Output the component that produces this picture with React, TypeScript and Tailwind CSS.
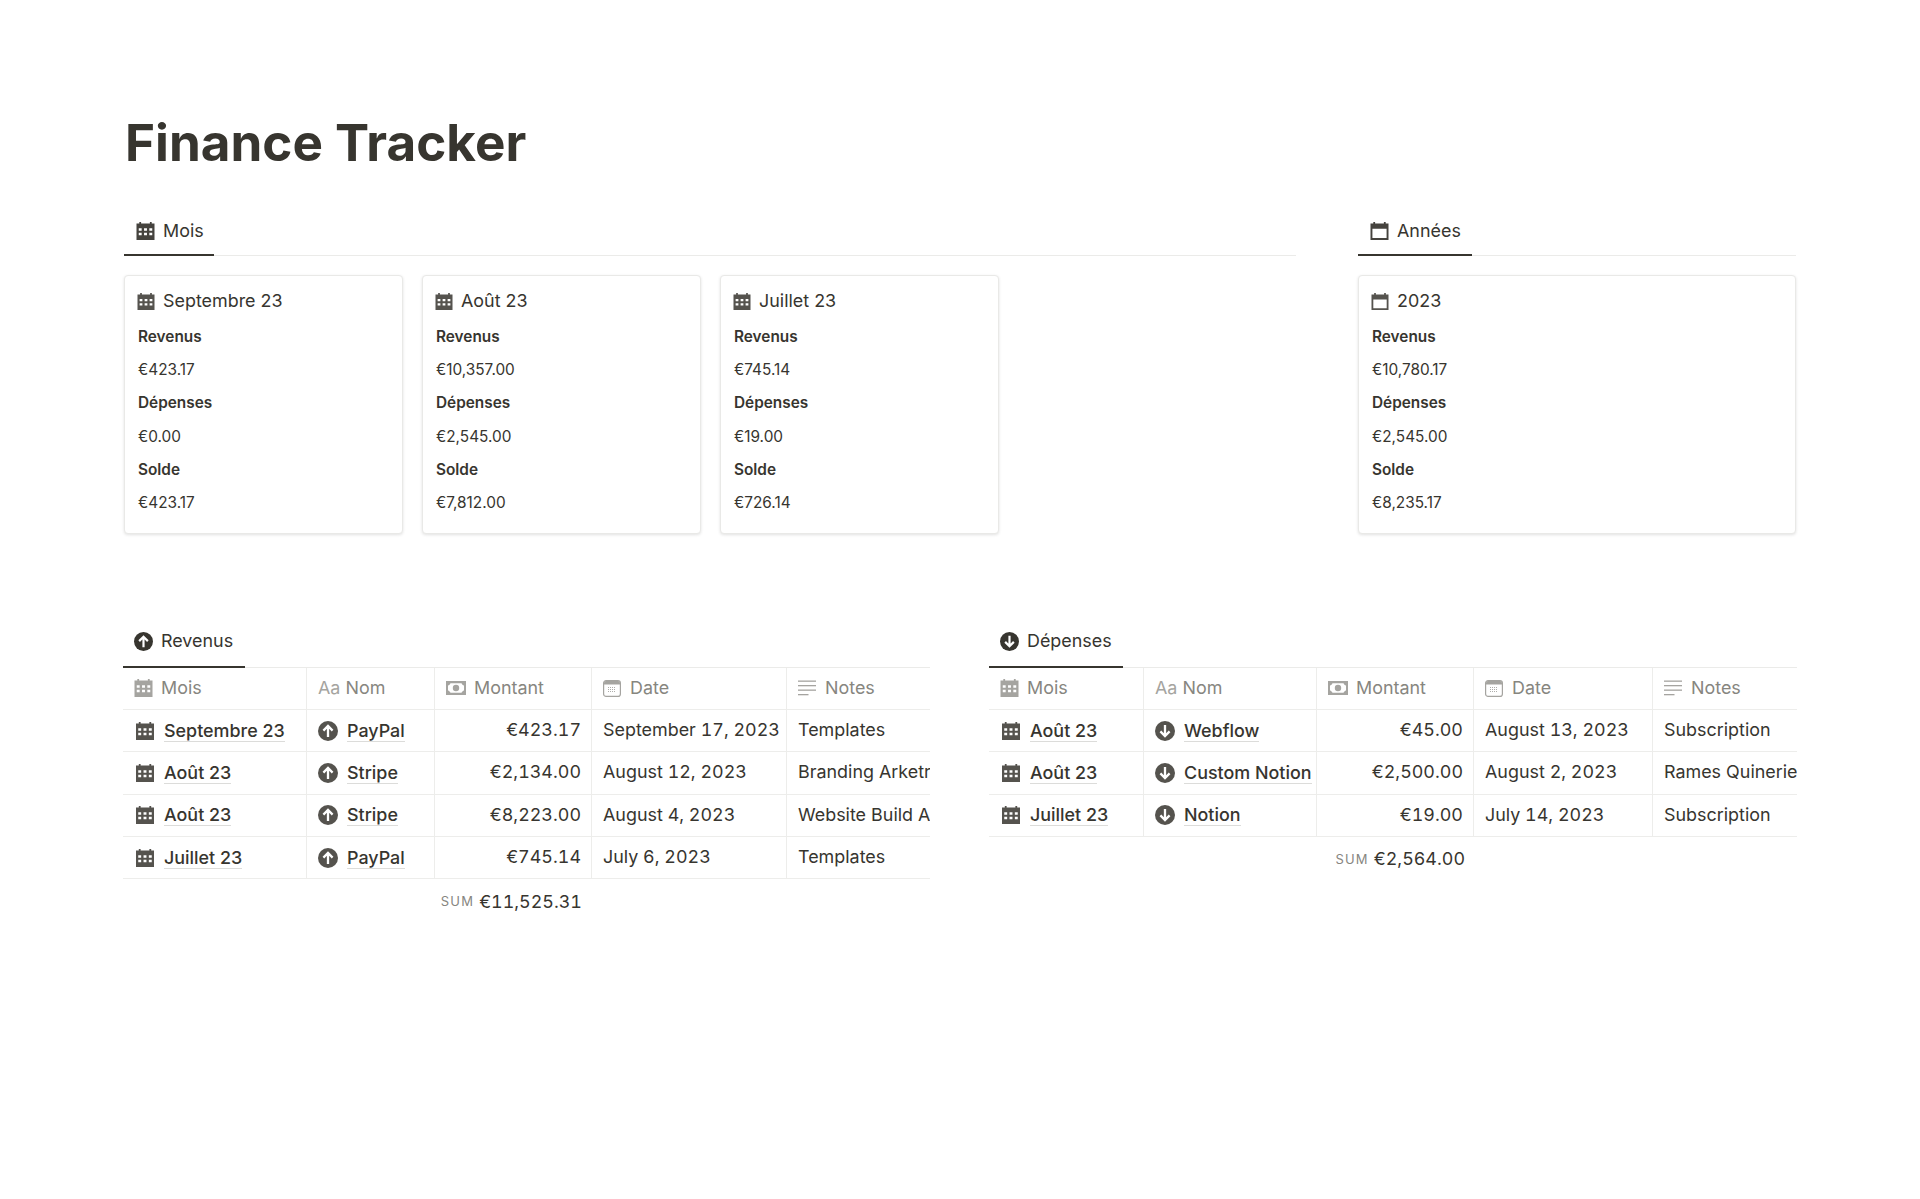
function CalendarIcon({ className = "" }: { className?: string }) {
  return (
    <svg viewBox="1 1 16 16" className={className} fill="currentColor">
      <path
        fillRule="evenodd"
        d="M3.5 1h1.6v1.4h7.8V1h1.6v1.4H17V17H1V2.4h2.5V1ZM3 6.600v2.200h2.600V6.600H3Zm4.700 0v2.200h2.600V6.600H7.700Zm4.700 0v2.200H15V6.600h-2.600ZM3 10.600v2.200h2.600v-2.200H3Zm4.700 0v2.200h2.600v-2.200H7.700Zm4.700 0v2.200H15v-2.200h-2.600Z"
      />
    </svg>
  );
}

function YearIcon({ className = "" }: { className?: string }) {
  return (
    <svg viewBox="1 1 16 16" className={className} fill="currentColor">
      <path
        fillRule="evenodd"
        d="M3.500 1h1.600v1.400h7.800V1h1.600v1.400H17V17H1V2.400h2.500V1ZM2.700 7v8.300h12.600V7H2.700Z"
      />
    </svg>
  );
}

function ArrowIcon({ up, className = "" }: { up: boolean; className?: string }) {
  return (
    <svg viewBox="0 0 20 20" className={className}>
      <circle cx="10" cy="10" r="10" fill="currentColor" />
      <path
        d={up ? "M10 16V5M5.400 9.600 10 5l4.600 4.600" : "M10 4v11M5.400 10.400 10 15l4.600-4.600"}
        fill="none"
        stroke="#fff"
        strokeWidth="2.300"
      />
    </svg>
  );
}

function MoneyIcon({ className = "" }: { className?: string }) {
  return (
    <svg viewBox="0 0 20 14" className={className} fill="currentColor">
      <path
        fillRule="evenodd"
        d="M0 0h20v14H0V0Zm4.500 2.200C4 3.400 3.200 4.200 2 4.600v4.800c1.200.4 2 1.200 2.500 2.400h11c.5-1.200 1.300-2 2.500-2.400V4.600c-1.200-.4-2-1.200-2.500-2.400h-11ZM10 3.800a3.200 3.200 0 1 1 0 6.400 3.200 3.200 0 0 1 0-6.400Z"
      />
    </svg>
  );
}

function DateIcon({ className = "" }: { className?: string }) {
  return (
    <svg viewBox="0 0 18 17" className={className}>
      <rect x="0.6" y="0.6" width="16.8" height="15.8" rx="2.5" fill="none" stroke="currentColor" strokeWidth="1.2" />
      <path d="M1 3a2 2 0 0 1 2-2h12a2 2 0 0 1 2 2v1.500H1V3Z" fill="currentColor" />
      <path d="M5 7.500h8M5 9.500h8M5 11.500h8" stroke="currentColor" strokeWidth="0.9" strokeDasharray="1 1" fill="none" />
    </svg>
  );
}

function NotesIcon({ className = "" }: { className?: string }) {
  return (
    <svg viewBox="0 0 18 16" className={className} fill="currentColor">
      <rect x="0" y="0.5" width="18" height="1.3" />
      <rect x="0" y="5" width="18" height="1.3" />
      <rect x="0" y="9.500" width="18" height="1.3" />
      <rect x="0" y="14" width="10.500" height="1.3" />
    </svg>
  );
}

function Tab({ icon, label, width, box }: { icon: React.ReactNode; label: string; width: string; box: string }) {
  return (
    <div className={"border-b border-[#ebebe9] " + box}>
      <div className={"flex items-center gap-[8px] border-b-2 border-[#37352f] pl-[12px] text-[17.92px] text-[#37352f] " + box + " " + width}>
        {icon}
        <span>{label}</span>
      </div>
    </div>
  );
}

function Card({ title, icon, values, className }: { title: string; icon: React.ReactNode; values: string[]; className: string }) {
  const labels = ["Revenus", "Dépenses", "Solde"];
  return (
    <div className={"h-[259px] rounded-[4px] border border-[#e9e9e7] bg-white px-[13px] pt-[12px] shadow-[0_1px_3px_rgba(15,15,15,0.12)] " + className}>
      <div className="flex h-[26px] items-center gap-[8px] text-[17.92px] text-[#37352f]">
        {icon}
        <span>{title}</span>
      </div>
      <div className="mt-[6px] text-[15.36px] text-[#37352f]">
        {labels.map((label, i) => (
          <div key={label}>
            <div className="flex h-[33px] items-center font-semibold">{label}</div>
            <div className="flex h-[33.5px] items-center">{values[i]}</div>
          </div>
        ))}
      </div>
    </div>
  );
}

type Row = { mois: string; nom: string; montant: string; date: string; notes: string };

function Table({ rows, columns, up, sum, sumWidth }: { rows: Row[]; columns: string; up: boolean; sum: string; sumWidth: string }) {
  const cell = "flex h-[41.35px] items-center overflow-hidden whitespace-nowrap border-r border-[#ededeb] px-[11px]";
  const head = cell + " text-[#87867f]";
  const line = "grid border-b border-[#ededeb] " + columns;
  const link = "border-b border-[#dcdcda] leading-[21px] font-[450]";
  return (
    <div className="overflow-hidden text-[17.92px] text-[#37352f]">
      <div className={line}>
        <div className={head + " gap-[8px]"}><CalendarIcon className="h-[18px] w-[19px] text-[#a5a4a0]" />Mois</div>
        <div className={head + " gap-[5px]"}><span className="text-[#a5a4a0]">Aa</span>Nom</div>
        <div className={head + " gap-[8px]"}><MoneyIcon className="h-[14px] w-[20px] text-[#a5a4a0]" />Montant</div>
        <div className={head + " gap-[9px]"}><DateIcon className="h-[17px] w-[18px] text-[#a5a4a0]" />Date</div>
        <div className={head + " gap-[9px] border-r-0"}><NotesIcon className="h-[16px] w-[18px] text-[#a5a4a0]" />Notes</div>
      </div>
      {rows.map((row, i) => (
        <div key={i} className={line}>
          <div className={cell + " gap-[10px] pl-[13px]"}>
            <CalendarIcon className="h-[18px] w-[18px] shrink-0 text-[#55534e]" />
            <span className={link}>{row.mois}</span>
          </div>
          <div className={cell + " gap-[9px]"}>
            <ArrowIcon up={up} className="h-[20px] w-[20px] shrink-0 text-[#55534e]" />
            <span className={link}>{row.nom}</span>
          </div>
          <div className={cell + " justify-end pr-[10px] tabular-nums"}>{row.montant}</div>
          <div className={cell + " tabular-nums"}>{row.date}</div>
          <div className={cell + " border-r-0"}>{row.notes}</div>
        </div>
      ))}
      <div className={"flex h-[46px] items-center justify-end gap-[5px] pr-[10px] " + sumWidth}>
        <span className="text-[13px] tracking-[1.2px] text-[#87867f]">SUM</span>
        <span className="tabular-nums">{sum}</span>
      </div>
    </div>
  );
}

const revenus: Row[] = [
  { mois: "Septembre 23", nom: "PayPal", montant: "€423.17", date: "September 17, 2023", notes: "Templates" },
  { mois: "Août 23", nom: "Stripe", montant: "€2,134.00", date: "August 12, 2023", notes: "Branding Arketnova" },
  { mois: "Août 23", nom: "Stripe", montant: "€8,223.00", date: "August 4, 2023", notes: "Website Build Arketnova" },
  { mois: "Juillet 23", nom: "PayPal", montant: "€745.14", date: "July 6, 2023", notes: "Templates" },
];

const depenses: Row[] = [
  { mois: "Août 23", nom: "Webflow", montant: "€45.00", date: "August 13, 2023", notes: "Subscription" },
  { mois: "Août 23", nom: "Custom Notion", montant: "€2,500.00", date: "August 2, 2023", notes: "Rames Quinerie" },
  { mois: "Juillet 23", nom: "Notion", montant: "€19.00", date: "July 14, 2023", notes: "Subscription" },
];

export default function App() {
  const cardIcon = <CalendarIcon className="-ml-px h-[17px] w-[18px] text-[#55534e]" />;
  const topTab = "h-[42px] pb-[6px]";
  const tableTab = "h-[44.5px] pb-[5.5px]";
  return (
    <div className="min-h-[1199px] bg-white font-['Inter',sans-serif] text-[#37352f]">
      <div className="px-[124px] pt-[111px]">
        <h1 className="pl-[1px] text-[51.2px] leading-[62px] font-bold">Finance Tracker</h1>

        <div className="mt-[41px] flex gap-[62px]">
          <div className="w-[1172px]">
            <Tab icon={<CalendarIcon className="h-[18px] w-[19px] text-[#45433e]" />} label="Mois" width="w-[90px]" box={topTab} />
            <div className="mt-[19px] flex gap-[19px]">
              <Card title="Septembre 23" icon={cardIcon} values={["€423.17", "€0.00", "€423.17"]} className="w-[279px]" />
              <Card title="Août 23" icon={cardIcon} values={["€10,357.00", "€2,545.00", "€7,812.00"]} className="w-[279px]" />
              <Card title="Juillet 23" icon={cardIcon} values={["€745.14", "€19.00", "€726.14"]} className="w-[279px]" />
            </div>
          </div>
          <div className="flex-1">
            <Tab icon={<YearIcon className="h-[18px] w-[19px] text-[#45433e]" />} label="Années" width="w-[114px]" box={topTab} />
            <div className="mt-[19px]">
              <Card title="2023" icon={<YearIcon className="-ml-px h-[17px] w-[18px] text-[#55534e]" />} values={["€10,780.17", "€2,545.00", "€8,235.17"]} className="w-full" />
            </div>
          </div>
        </div>

        <div className="mt-[89px] -ml-px flex gap-[59px]">
          <div className="w-[807px]">
            <Tab icon={<ArrowIcon up className="-ml-px h-[19px] w-[19px] text-[#37352f]" />} label="Revenus" width="w-[122px]" box={tableTab} />
            <Table rows={revenus} up columns="grid-cols-[184px_128px_157px_195px_143px]" sum="€11,525.31" sumWidth="w-[469px]" />
          </div>
          <div className="w-[808px]">
            <Tab icon={<ArrowIcon up={false} className="-ml-px h-[19px] w-[19px] text-[#37352f]" />} label="Dépenses" width="w-[134px]" box={tableTab} />
            <Table rows={depenses} up={false} columns="grid-cols-[155px_173px_157px_179px_144px]" sum="€2,564.00" sumWidth="w-[486px]" />
          </div>
        </div>
      </div>
    </div>
  );
}
